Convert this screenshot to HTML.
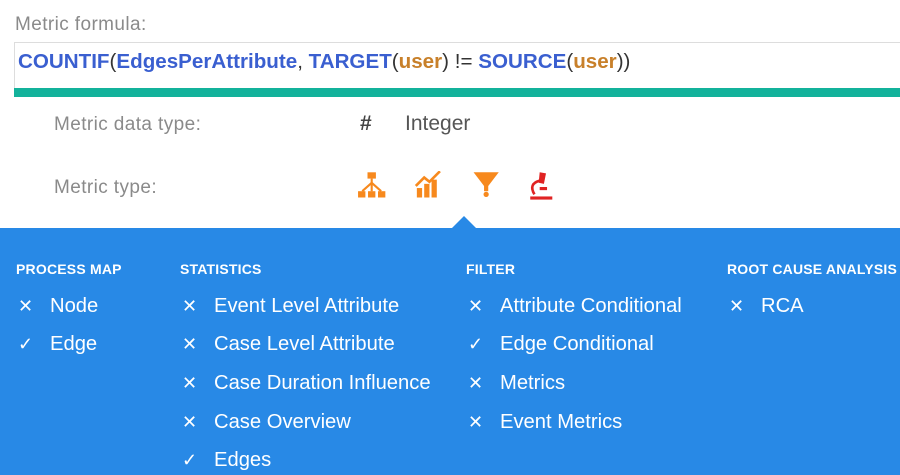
<!DOCTYPE html>
<html><head><style>
body{margin:0;width:900px;height:475px;overflow:hidden;background:#fff;font-family:"Liberation Sans",sans-serif;position:relative}
.lbl{position:absolute;color:#8a8a8a;font-size:19px;letter-spacing:0.4px}
.box{position:absolute;left:14px;top:42px;width:900px;height:47px;border:1px solid #ddd;border-bottom:none;box-sizing:border-box}
.bar{position:absolute;left:14px;top:88px;width:900px;height:9px;background:#13b29b}
.f{position:absolute;left:18px;top:50px;font-size:20.6px;color:#333;white-space:nowrap}
.b{color:#3a5fd0;font-weight:bold}.o{color:#c8802a;font-weight:bold}
.panel{position:absolute;left:0;top:228px;width:900px;height:247px;background:#2889e6;color:#fff}
.caret{position:absolute;left:452px;top:216px;width:0;height:0;border-left:12px solid transparent;border-right:12px solid transparent;border-bottom:12px solid #2889e6}
.h{position:absolute;top:33px;font-size:14px;font-weight:bold;letter-spacing:0.2px;white-space:nowrap}
.it{position:absolute;font-size:20.2px;white-space:nowrap}
.it span{display:inline-block;width:32px;font-size:18px}
</style></head><body>
<div class="lbl" style="left:15px;top:14px">Metric formula:</div>
<div class="box"></div><div class="bar"></div>
<div class="f"><span class="b">COUNTIF</span>(<span class="b">EdgesPerAttribute</span>, <span class="b">TARGET</span>(<span class="o">user</span>) != <span class="b">SOURCE</span>(<span class="o">user</span>))</div>
<div class="lbl" style="left:54px;top:114px">Metric data type:</div>
<div style="position:absolute;left:360px;top:112px;font-size:21px;color:#444;font-weight:bold">#</div>
<div style="position:absolute;left:405px;top:112px;font-size:21px;color:#555">Integer</div>
<div class="lbl" style="left:54px;top:177px">Metric type:</div>
<svg style="position:absolute;left:357px;top:171px" width="210" height="32" viewBox="0 0 200 30">
<g fill="#f7891d">
<rect x="10" y="1" width="8" height="6"/><rect x="13" y="7" width="2" height="5"/>
<path d="M14 11 L5 19 M14 11 L14 19 M14 11 L23 19" stroke="#f7891d" stroke-width="2" fill="none"/>
<rect x="1" y="19" width="7" height="6"/><rect x="10.5" y="19" width="7" height="6"/><rect x="20" y="19" width="7" height="6"/>
<rect x="57" y="16" width="5" height="9"/><rect x="64" y="12" width="5" height="13"/><rect x="71" y="8" width="5" height="17"/>
<path d="M56 14 L64 6 L69 10 L79 0" stroke="#f7891d" stroke-width="2.5" fill="none"/>
<path d="M111 1 L135 1 L125 14 L121 14 Z"/><rect x="121" y="14" width="4" height="5"/><circle cx="123" cy="22" r="2.5"/>
</g>
<g fill="#e02323">
<rect x="165" y="24" width="21" height="3"/>
<path d="M174 1 L180 2 L178 12 L173 11 Z"/>
<path d="M169 22 Q163 12 174 9" stroke="#e02323" stroke-width="2.5" fill="none"/>
<rect x="174" y="15" width="7" height="3"/>
</g>
</svg>
<div class="caret"></div>
<div class="panel">
<div class="h" style="left:16px">PROCESS MAP</div>
<div class="h" style="left:180px">STATISTICS</div>
<div class="h" style="left:466px">FILTER</div>
<div class="h" style="left:727px">ROOT CAUSE ANALYSIS</div>
<div class="it" style="left:18px;top:67px"><span>✕</span>Node</div>
<div class="it" style="left:18px;top:105px"><span>✓</span>Edge</div>
<div class="it" style="left:182px;top:67px"><span>✕</span>Event Level Attribute</div>
<div class="it" style="left:182px;top:105px"><span>✕</span>Case Level Attribute</div>
<div class="it" style="left:182px;top:144px"><span>✕</span>Case Duration Influence</div>
<div class="it" style="left:182px;top:183px"><span>✕</span>Case Overview</div>
<div class="it" style="left:182px;top:221px"><span>✓</span>Edges</div>
<div class="it" style="left:468px;top:67px"><span>✕</span>Attribute Conditional</div>
<div class="it" style="left:468px;top:105px"><span>✓</span>Edge Conditional</div>
<div class="it" style="left:468px;top:144px"><span>✕</span>Metrics</div>
<div class="it" style="left:468px;top:183px"><span>✕</span>Event Metrics</div>
<div class="it" style="left:729px;top:67px"><span>✕</span>RCA</div>
</div>
</body></html>
